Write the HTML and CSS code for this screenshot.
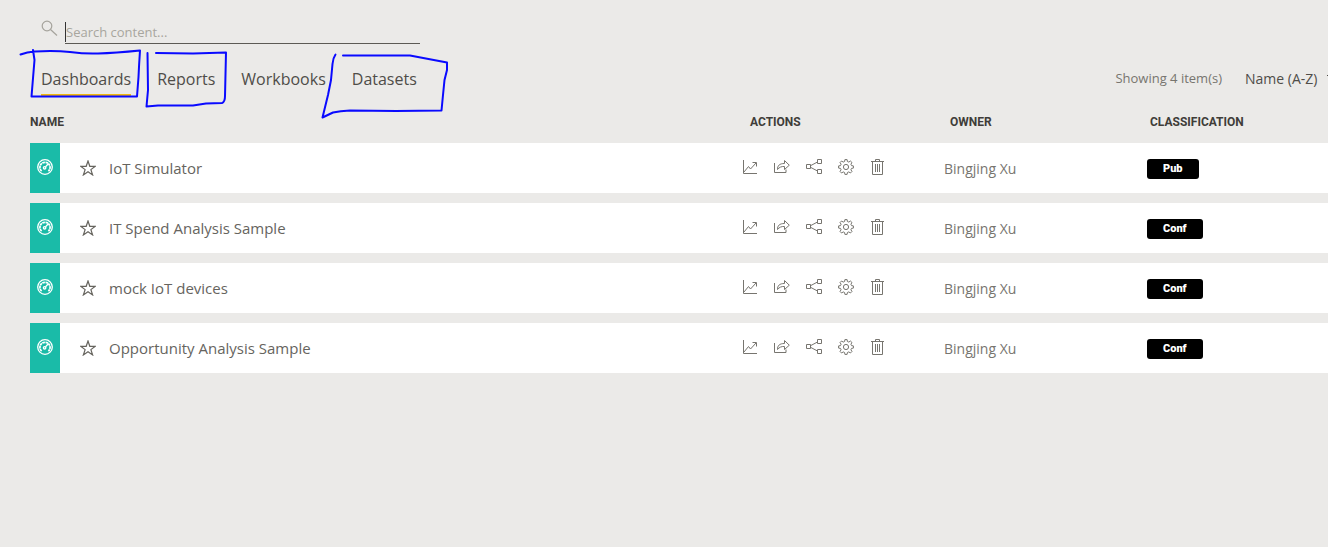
FILE: index.html
```html
<!DOCTYPE html>
<html lang="en">
<head>
<meta charset="utf-8">
<meta name="viewport" content="width=device-width, initial-scale=1">
<title>Dashboards</title>
<link rel="stylesheet" href="styles.css">
</head>
<body>
<svg class="defs" aria-hidden="true">
  <symbol id="gauge" viewBox="0 0 16 16"><circle cx="8" cy="8" r="7.300" stroke-width="1.300"/><path d="M4.600 12.200A5.100 5.100 0 1 1 11.400 12.200" stroke-width="1.700" stroke-dasharray="2.600 .5"/><circle cx="7.600" cy="8.800" r="1.200" stroke-width="1.400"/><path d="M8.500 7.900l3-3.400" stroke-width="1.400"/></symbol>
  <symbol id="star" viewBox="0 0 16 16"><path d="M8 1l1.800 5.300h5.500l-4.400 3.300 1.700 5.300L8 11.700l-4.600 3.200 1.700-5.300L.7 6.300h5.500z" stroke-width="1.200"/></symbol>
  <symbol id="chart" viewBox="0 0 16 16"><path d="M1.500 1v13.500H15M2 13l4.500-5.500 2 2.500L14 4M10.500 3.500H14.500V7.500"/></symbol>
  <symbol id="share" viewBox="0 0 16 16"><path d="M.5 4v9.500h11.500v-3M3.500 10.500C3.500 6.500 5.500 4.500 10.500 4.500V1.500L15.300 6.200 10.500 10.500V7.500C7.500 7.300 5.200 8.200 3.500 10.500z"/></symbol>
  <symbol id="related" viewBox="0 0 16 16"><path d="M.5 5.500h4v4h-4zM11.500 .5h4v4h-4zM11.500 10.500h4v4h-4zM4.500 6.700l7-3.700M4.500 8.300l7 3.700"/></symbol>
  <symbol id="gear" viewBox="0 0 16 16"><path d="M6.600 2.500L6.900.6h2.200l.3 1.900 1.400.6 1.600-1.100 1.600 1.600-1.100 1.600.6 1.400 1.900.3v2.200l-1.900.3-.6 1.400 1.100 1.600-1.600 1.600-1.600-1.100-1.400.6-.3 1.900H6.900l-.3-1.900-1.400-.6-1.600 1.100L2 12.400l1.100-1.600-.6-1.400-1.900-.3V6.900l1.900-.3.6-1.400L2 3.600 3.600 2l1.600 1.100z"/><circle cx="8" cy="8" r="2.600"/></symbol>
  <symbol id="trash" viewBox="0 0 16 16"><path d="M1 2.500h13M5.500 2.500v-2h4v2M2.500 2.500v13h10v-13M5.500 5v8M7.500 5v8M9.500 5v8"/></symbol>
</svg>

<main class="page">
  <div class="search">
    <svg class="search-icon" viewBox="0 0 18 18" aria-hidden="true"><circle cx="6" cy="6" r="4.800"/><path d="M9.500 9.500l6.500 6"/></svg>
    <div class="search-field">
      <span class="caret"></span>
      <input type="text" placeholder="Search content..." aria-label="Search content">
    </div>
  </div>

  <div class="toolbar">
    <nav class="tabs" aria-label="Content types">
      <a class="tab active" href="#dashboards">Dashboards</a>
      <a class="tab" href="#reports">Reports</a>
      <a class="tab" href="#workbooks">Workbooks</a>
      <a class="tab" href="#datasets">Datasets</a>
    </nav>
    <span class="count">Showing 4 item(s)</span>
    <div class="sort">
      <select aria-label="Sort by"><option>Name (A-Z)</option></select>
      <svg class="chevron" viewBox="0 0 12 8" aria-hidden="true"><path d="M1 1l5 5 5-5"/></svg>
    </div>
  </div>

  <table class="content">
    <colgroup><col class="col-type"><col><col class="col-actions"><col class="col-owner"><col class="col-class"></colgroup>
    <thead>
      <tr><th colspan="2">NAME</th><th class="th-actions">ACTIONS</th><th class="th-owner">OWNER</th><th class="th-class">CLASSIFICATION</th></tr>
    </thead>
    <tbody>
      <tr>
        <td class="type"><svg class="icon"><use href="#gauge"/></svg></td>
        <td><div class="name"><button aria-label="Favorite"><svg class="icon"><use href="#star"/></svg></button><a href="#iot">IoT Simulator</a></div></td>
        <td><div class="actions"><button aria-label="Metrics"><svg class="icon"><use href="#chart"/></svg></button><button aria-label="Share"><svg class="icon"><use href="#share"/></svg></button><button aria-label="Related"><svg class="icon"><use href="#related"/></svg></button><button aria-label="Settings"><svg class="icon"><use href="#gear"/></svg></button><button aria-label="Delete"><svg class="icon"><use href="#trash"/></svg></button></div></td>
        <td class="owner">Bingjing Xu</td>
        <td><span class="badge">Pub</span></td>
      </tr>
      <tr>
        <td class="type"><svg class="icon"><use href="#gauge"/></svg></td>
        <td><div class="name"><button aria-label="Favorite"><svg class="icon"><use href="#star"/></svg></button><a href="#spend">IT Spend Analysis Sample</a></div></td>
        <td><div class="actions"><button aria-label="Metrics"><svg class="icon"><use href="#chart"/></svg></button><button aria-label="Share"><svg class="icon"><use href="#share"/></svg></button><button aria-label="Related"><svg class="icon"><use href="#related"/></svg></button><button aria-label="Settings"><svg class="icon"><use href="#gear"/></svg></button><button aria-label="Delete"><svg class="icon"><use href="#trash"/></svg></button></div></td>
        <td class="owner">Bingjing Xu</td>
        <td><span class="badge">Conf</span></td>
      </tr>
      <tr>
        <td class="type"><svg class="icon"><use href="#gauge"/></svg></td>
        <td><div class="name"><button aria-label="Favorite"><svg class="icon"><use href="#star"/></svg></button><a href="#mock">mock IoT devices</a></div></td>
        <td><div class="actions"><button aria-label="Metrics"><svg class="icon"><use href="#chart"/></svg></button><button aria-label="Share"><svg class="icon"><use href="#share"/></svg></button><button aria-label="Related"><svg class="icon"><use href="#related"/></svg></button><button aria-label="Settings"><svg class="icon"><use href="#gear"/></svg></button><button aria-label="Delete"><svg class="icon"><use href="#trash"/></svg></button></div></td>
        <td class="owner">Bingjing Xu</td>
        <td><span class="badge">Conf</span></td>
      </tr>
      <tr>
        <td class="type"><svg class="icon"><use href="#gauge"/></svg></td>
        <td><div class="name"><button aria-label="Favorite"><svg class="icon"><use href="#star"/></svg></button><a href="#opportunity">Opportunity Analysis Sample</a></div></td>
        <td><div class="actions"><button aria-label="Metrics"><svg class="icon"><use href="#chart"/></svg></button><button aria-label="Share"><svg class="icon"><use href="#share"/></svg></button><button aria-label="Related"><svg class="icon"><use href="#related"/></svg></button><button aria-label="Settings"><svg class="icon"><use href="#gear"/></svg></button><button aria-label="Delete"><svg class="icon"><use href="#trash"/></svg></button></div></td>
        <td class="owner">Bingjing Xu</td>
        <td><span class="badge">Conf</span></td>
      </tr>
    </tbody>
  </table>
</main>

<svg class="ink" viewBox="0 0 460 130" aria-hidden="true">
  <path d="M20.500 54.500Q27 52 35 51.500Q55 50.500 70 52Q85 54 98 53.500Q115 53 140 50.500Q139 65 138.500 77L137 96.500H31.500L34.500 60L33 50"/>
  <path d="M147.500 53L148 90L146.500 106.500L158 105.500L193 105.500L206 103.500L222 103Q225 102 225 96L226 52.500L193 53.500L156 53"/>
  <path d="M335.500 54.500Q333 58 332.500 64L331 80L328 95L322.500 117.500L333 112.500Q340 111 350 110.500L396 111L441.500 110.500L443 95L444.500 80L447 70V62.500L410 55.500H343"/>
</svg>
</body>
</html>
```

FILE: styles.css
```css
* { box-sizing: border-box; }

body {
  margin: 0;
  min-height: 100vh;
  overflow-x: hidden;
  background: #ebeae8;
  color: #4f4d48;
  font-family: "Open Sans", "Noto Sans", sans-serif;
  font-size: 14px;
}

a { color: inherit; text-decoration: none; }

button {
  display: block;
  padding: 0;
  border: 0;
  background: none;
  color: inherit;
}

svg { display: block; fill: none; stroke: currentColor; }

.defs { position: absolute; width: 0; height: 0; }

.icon { width: 16px; height: 16px; }

.page { padding: 20px 0 0 30px; }

.search {
  display: flex;
  gap: 6px;
  padding-left: 11px;
}

.search-icon { width: 18px; height: 18px; color: #a5a39c; stroke-width: 1.2; }

.search-field {
  display: flex;
  align-items: center;
  width: 355px;
  height: 24px;
  border-bottom: 1px solid #5c5a55;
}

.caret { width: 1px; height: 20px; background: #333; }

.search input {
  flex: 1;
  min-width: 0;
  padding: 0;
  border: 0;
  outline: 0;
  background: transparent;
  font: inherit;
  font-size: 13px;
}

.search input::placeholder { color: #a8a69e; opacity: 1; }

.toolbar {
  display: flex;
  align-items: center;
  height: 68px;
  padding-left: 11px;
}

.tabs { display: flex; gap: 26px; margin-right: auto; }

.tab {
  padding-top: 4px;
  border-bottom: 2px solid transparent;
  font-size: 16px;
  line-height: 30px;
}

.tab.active { border-color: #f2b90c; }

.count { margin-right: 23px; color: #77756f; font-size: 13px; }

.sort {
  display: flex;
  align-items: center;
  gap: 8px;
  margin-right: -10px;
}

.sort select {
  appearance: none;
  padding: 0;
  border: 0;
  background: none;
  color: #4f4d48;
  font: inherit;
}

.chevron { width: 12px; height: 8px; }

.content {
  width: 100%;
  table-layout: fixed;
  border-collapse: separate;
  border-spacing: 0 10px;
  margin-top: -11px;
}

.col-type { width: 30px; }
.col-actions { width: 202px; }
.col-owner { width: 203px; }
.col-class { width: 181px; }

th {
  height: 22px;
  padding: 0;
  color: #3f3d39;
  font: 700 12px/16px Roboto, sans-serif;
  text-align: left;
}

.th-actions { padding-left: 8px; }
.th-owner { padding-left: 6px; }
.th-class { padding-left: 3px; }

td { height: 50px; padding: 0; background: #fff; color: #77756f; }

.content .type { padding: 0 0 3px 7px; background: #1abba8; color: #fff; }

.name { display: flex; align-items: center; gap: 13px; padding-left: 20px; color: #66645e; }
.name a { font-size: 15px; }

.actions { display: flex; gap: 16px; padding-bottom: 2px; color: #77756f; }

.badge {
  display: inline-block;
  padding: 0 16px;
  border-radius: 3px;
  background: #000;
  color: #fff;
  font: 900 11px/20px Roboto, sans-serif;
}

.ink {
  position: absolute;
  top: 0;
  left: 0;
  width: 460px;
  height: 130px;
  color: #0a0aff;
  stroke-width: 2;
  stroke-linecap: round;
  stroke-linejoin: round;
  pointer-events: none;
}
```
